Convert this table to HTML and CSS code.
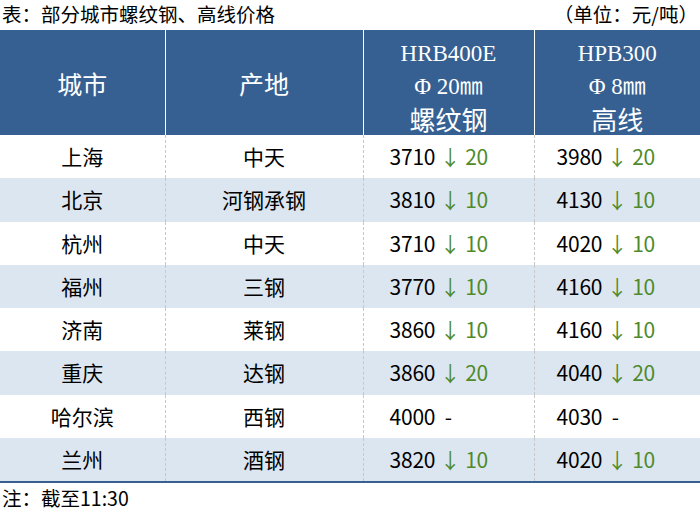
FILE: index.html
```html
<!DOCTYPE html>
<html lang="zh-CN">
<head>
<meta charset="utf-8">
<link rel="stylesheet" href="styles.css">
</head>
<body>
<div class="page">
  <div class="caption">
    <span class="title">表：部分城市螺纹钢、高线价格</span>
    <span class="unit">（单位：元/吨）</span>
  </div>
  <table class="prices">
    <colgroup>
      <col class="c1"><col class="c2"><col class="c3"><col class="c4">
    </colgroup>
    <thead>
      <tr>
        <th class="hcn">城市</th>
        <th class="hcn">产地</th>
        <th><div class="hl">HRB400E</div><div class="hl">Φ 20㎜</div><div class="hl cn">螺纹钢</div></th>
        <th><div class="hl">HPB300</div><div class="hl">Φ 8㎜</div><div class="hl cn">高线</div></th>
      </tr>
    </thead>
    <tbody>
      <tr><td>上海</td><td>中天</td><td class="p p3">3710 <span class="dn">↓ 20</span></td><td class="p p4">3980 <span class="dn">↓ 20</span></td></tr>
      <tr class="alt"><td>北京</td><td>河钢承钢</td><td class="p p3">3810 <span class="dn">↓ 10</span></td><td class="p p4">4130 <span class="dn">↓ 10</span></td></tr>
      <tr><td>杭州</td><td>中天</td><td class="p p3">3710 <span class="dn">↓ 10</span></td><td class="p p4">4020 <span class="dn">↓ 10</span></td></tr>
      <tr class="alt"><td>福州</td><td>三钢</td><td class="p p3">3770 <span class="dn">↓ 10</span></td><td class="p p4">4160 <span class="dn">↓ 10</span></td></tr>
      <tr><td>济南</td><td>莱钢</td><td class="p p3">3860 <span class="dn">↓ 10</span></td><td class="p p4">4160 <span class="dn">↓ 10</span></td></tr>
      <tr class="alt"><td>重庆</td><td>达钢</td><td class="p p3">3860 <span class="dn">↓ 20</span></td><td class="p p4">4040 <span class="dn">↓ 20</span></td></tr>
      <tr><td>哈尔滨</td><td>西钢</td><td class="p p3">4000 <span class="flat">-</span></td><td class="p p4">4030 <span class="flat">-</span></td></tr>
      <tr class="alt"><td>兰州</td><td>酒钢</td><td class="p p3">3820 <span class="dn">↓ 10</span></td><td class="p p4">4020 <span class="dn">↓ 10</span></td></tr>
    </tbody>
  </table>
  <div class="note">注：截至11:30</div>
</div>
</body>
</html>
```

FILE: styles.css
```css
html, body {
  margin: 0;
  padding: 0;
  background: #ffffff;
}
.page {
  width: 700px;
  height: 514px;
  font-family: "Noto Sans CJK SC", "Noto Sans", sans-serif;
  color: #000;
}
.caption {
  height: 30px;
  display: flex;
  justify-content: space-between;
  align-items: flex-start;
  font-size: 19.5px;
  line-height: 24px;
  padding: 2px 2px 0 2px;
  box-sizing: border-box;
}
.prices {
  width: 700px;
  border-collapse: collapse;
  table-layout: fixed;
}
.c1 { width: 165px; }
.c2 { width: 198px; }
.c3 { width: 171px; }
.c4 { width: 166px; }
.prices thead th {
  background: #366092;
  color: #ffffff;
  height: 105px;
  padding: 0;
  font-weight: normal;
  border-left: 1px solid #ffffff;
  text-align: center;
  vertical-align: middle;
  font-family: "Liberation Serif", "Noto Sans CJK SC", serif;
}
.prices thead th:first-child {
  border-left: none;
}
.hcn {
  font-size: 25px;
  padding-top: 4px;
}
.prices thead th .hl {
  font-size: 23px;
  line-height: 33px;
  height: 33px;
}
.prices thead th .hl.cn {
  font-size: 26px;
  font-family: "Noto Sans CJK SC", sans-serif;
  line-height: 31px;
  height: 31px;
}
.prices thead th > .hl:first-child {
  margin-top: 5px;
}
.prices tbody td {
  height: 43.25px;
  padding: 0;
  font-size: 21px;
  text-align: center;
  vertical-align: middle;
  border-left: 1px dashed #c8c8c8;
  line-height: 1;
}
.prices tbody td:first-child {
  border-left: none;
}
.prices tbody tr.alt td {
  background: #dce6f1;
}
.prices tbody tr:last-child td {
  border-bottom: 2px solid #366092;
}
.prices tbody td.p {
  text-align: left;
  letter-spacing: -0.2px;
}
.prices tbody td.p3 { padding-left: 26px; }
.prices tbody td.p4 { padding-left: 22px; }
.dn {
  color: #4f8a2b;
}
.flat {
  margin-left: 5px;
}
.note {
  font-size: 19.5px;
  line-height: 30px;
  padding-left: 2px;
}
```
